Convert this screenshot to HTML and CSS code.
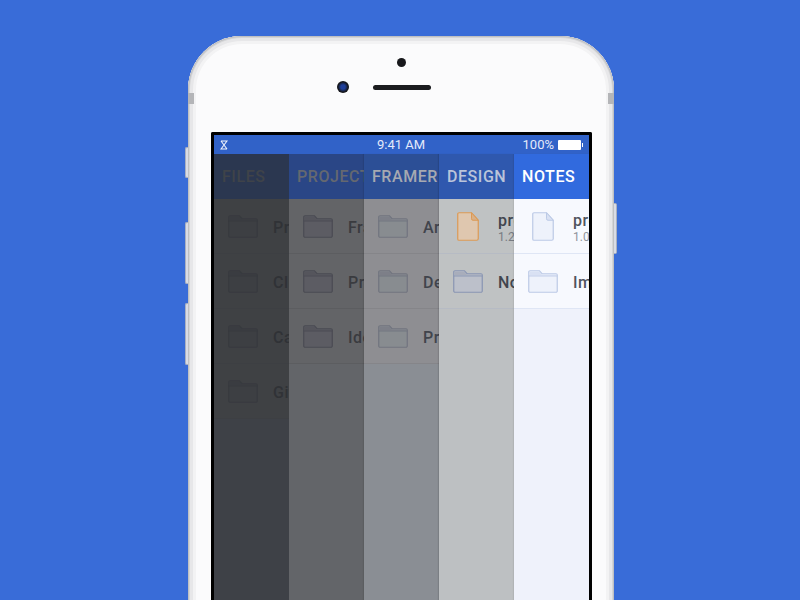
FILE: index.html
```html
<!DOCTYPE html>
<html lang="en">
<head>
<meta charset="utf-8">
<title>Files</title>
<link rel="stylesheet" href="styles.css">
</head>
<body>
<svg class="defs" width="0" height="0" aria-hidden="true">
  <symbol id="folder" viewBox="0 0 30 23">
    <path class="ic-body" d="M2 .75h9.5l2.5 3h14A1.25 1.25 0 0 1 29.25 5v16A1.25 1.25 0 0 1 28 22.25H2A1.25 1.25 0 0 1 .75 21V2A1.25 1.25 0 0 1 2 .75z"/>
    <path class="ic-tab" d="M2 1.4h9.2l2.5 3H28.6v1.2H1.4V2z"/>
    <path class="ic-line" d="M.75 6h28.5"/>
  </symbol>
  <symbol id="file" viewBox="0 0 22 29">
    <path class="ic-body" d="M2 .75h12.5l6.75 7.5V26.75A1.5 1.5 0 0 1 19.75 28.25H2A1.25 1.25 0 0 1 .75 27V2A1.25 1.25 0 0 1 2 .75z"/>
    <path class="ic-tab ic-fold" d="M14.5 .75v6a1.5 1.5 0 0 0 1.5 1.5h5.25z"/>
  </symbol>
</svg>
<main class="stage">
  <div class="phone">
    <span class="side side-mute"></span>
    <span class="side side-up"></span>
    <span class="side side-down"></span>
    <span class="side side-power"></span>
    <span class="band band-left"></span>
    <span class="band band-right"></span>
    <div class="bezel">
      <span class="sensor"></span>
      <div class="speaker-row">
        <span class="camera"></span>
        <span class="speaker"></span>
      </div>
    </div>
    <div class="screen">
      <div class="status">
        <svg class="logo" viewBox="0 0 8 10" width="8" height="10"><path d="M1 1h6L1 9h6M1 1l6 8"/></svg>
        <span class="time">9:41 AM</span>
        <div class="power">
          <span>100%</span>
          <span class="battery"></span>
        </div>
      </div>
      <div class="columns">
        <section class="col col-files">
          <h2 class="tab">FILES</h2>
          <div class="row"><svg class="icon-folder"><use href="#folder"/></svg><div class="label"><span class="name">Projects</span></div></div>
          <div class="row"><svg class="icon-folder"><use href="#folder"/></svg><div class="label"><span class="name">Clients</span></div></div>
          <div class="row"><svg class="icon-folder"><use href="#folder"/></svg><div class="label"><span class="name">Camera</span></div></div>
          <div class="row"><svg class="icon-folder"><use href="#folder"/></svg><div class="label"><span class="name">Github</span></div></div>
        </section>
        <section class="col col-projects">
          <h2 class="tab">PROJECTS</h2>
          <div class="row"><svg class="icon-folder"><use href="#folder"/></svg><div class="label"><span class="name">Framer</span></div></div>
          <div class="row"><svg class="icon-folder"><use href="#folder"/></svg><div class="label"><span class="name">Prototypes</span></div></div>
          <div class="row"><svg class="icon-folder"><use href="#folder"/></svg><div class="label"><span class="name">Ideas</span></div></div>
        </section>
        <section class="col col-framer">
          <h2 class="tab">FRAMER</h2>
          <div class="row"><svg class="icon-folder"><use href="#folder"/></svg><div class="label"><span class="name">Archive</span></div></div>
          <div class="row"><svg class="icon-folder"><use href="#folder"/></svg><div class="label"><span class="name">Design</span></div></div>
          <div class="row"><svg class="icon-folder"><use href="#folder"/></svg><div class="label"><span class="name">Projects</span></div></div>
        </section>
        <section class="col col-design">
          <h2 class="tab">DESIGN</h2>
          <div class="row"><svg class="icon-file icon-file-orange"><use href="#file"/></svg><div class="label"><span class="name">project</span><span class="meta">1.2 MB</span></div></div>
          <div class="row"><svg class="icon-folder"><use href="#folder"/></svg><div class="label"><span class="name">Notes</span></div></div>
        </section>
        <section class="col col-notes">
          <h2 class="tab">NOTES</h2>
          <div class="row"><svg class="icon-file"><use href="#file"/></svg><div class="label"><span class="name">project</span><span class="meta">1.0 MB</span></div></div>
          <div class="row"><svg class="icon-folder"><use href="#folder"/></svg><div class="label"><span class="name">Images</span></div></div>
        </section>
      </div>
    </div>
  </div>
</main>
</body>
</html>
```

FILE: styles.css
```css
* { box-sizing: border-box; }

html, body {
  margin: 0;
  height: 100%;
}

body {
  background: #396cd8;
  font-family: "Roboto", "Liberation Sans", sans-serif;
}

.defs { position: absolute; }

.stage {
  width: 800px;
  height: 600px;
  overflow: hidden;
  display: flex;
  justify-content: center;
  padding: 36px 0 0 2px;
}

.phone {
  position: relative;
  flex: none;
  width: 426px;
  height: 760px;
  padding: 0 22px 0 23px;
  border-radius: 54px;
  background: #fbfbfc;
  box-shadow:
    inset 0 0 0 1px #bfc0c3,
    inset 0 0 0 2px #d4d5d7,
    inset 0 0 0 5px #e7e7e9,
    inset 0 0 0 8px #f3f3f4;
}

.side {
  position: absolute;
  width: 3px;
  background: #d9dce5;
  border: 1px solid #aab0c0;
}

.side-mute { left: -3px; top: 111px; height: 31px; border-right: 0; border-radius: 2px 0 0 2px; }
.side-up { left: -3px; top: 186px; height: 62px; border-right: 0; border-radius: 2px 0 0 2px; }
.side-down { left: -3px; top: 267px; height: 62px; border-right: 0; border-radius: 2px 0 0 2px; }
.side-power { right: -3px; top: 167px; height: 51px; border-left: 0; border-radius: 0 2px 2px 0; }

.band {
  position: absolute;
  top: 57px;
  width: 6px;
  height: 11px;
  background: #b4b5b8;
}

.band-left { left: 0; }
.band-right { right: 0; }

.bezel {
  height: 96px;
  display: flex;
  flex-direction: column;
  align-items: center;
  padding-top: 22px;
}

.sensor {
  width: 9px;
  height: 9px;
  border-radius: 50%;
  background: #17181b;
}

.speaker-row {
  width: 100%;
  margin-top: 14px;
  display: grid;
  grid-template-columns: 1fr 58px 1fr;
  align-items: center;
}

.camera {
  justify-self: end;
  width: 12px;
  height: 12px;
  margin-right: 24px;
  border-radius: 50%;
  background: radial-gradient(circle, #1f3f9a 0, #1f3f9a 25%, #15161a 60%);
}

.speaker {
  height: 5px;
  border-radius: 3px;
  background: #1b1c1f;
}

.screen {
  width: 381px;
  height: 600px;
  border: 3px solid #000;
  border-bottom: 0;
  border-radius: 2px 2px 0 0;
  background: #eff2fb;
  overflow: hidden;
}

.status {
  height: 19px;
  padding: 0 7px 0 6px;
  display: grid;
  grid-template-columns: 1fr auto 1fr;
  align-items: center;
  background: #3162c8;
  color: #e4eafa;
  font-size: 13px;
}

.logo {
  fill: none;
  stroke: #eef2fb;
  stroke-width: 1.1;
}

.power {
  justify-self: end;
  display: flex;
  align-items: center;
  gap: 4px;
}

.battery {
  position: relative;
  width: 23px;
  height: 10px;
  margin-right: 1px;
  border-radius: 1px;
  background: #fff;
}

.battery::after {
  content: "";
  position: absolute;
  right: -2px;
  top: 3px;
  width: 1px;
  height: 4px;
  background: #fff;
}

.columns {
  display: flex;
  height: 600px;
}

.col {
  position: relative;
  flex: 0 0 75px;
  overflow: hidden;
  background: var(--bg);
  box-shadow: -1px 0 1px var(--edge);
}

.tab {
  margin: 0;
  height: 45px;
  padding-left: 8px;
  display: flex;
  align-items: center;
  white-space: nowrap;
  font-size: 16px;
  font-weight: 500;
  letter-spacing: .55px;
  background: var(--tab);
  color: var(--tab-text);
}

.row {
  height: 55px;
  display: flex;
  align-items: center;
  padding-left: 14px;
  background: var(--row);
  border-bottom: 1px solid var(--line);
  white-space: nowrap;
}

.icon-folder {
  flex: none;
  width: 30px;
  height: 23px;
  margin-right: 15px;
}

.icon-file {
  flex: none;
  width: 22px;
  height: 29px;
  margin: 0 19px 0 4px;
}

.ic-body { fill: var(--ic-fill); stroke: var(--ic-stroke); stroke-width: 1.2; }
.ic-tab { fill: var(--ic-tab); }
.ic-fold { stroke: var(--ic-stroke); stroke-width: 1; }
.ic-line { fill: none; stroke: var(--ic-stroke); stroke-width: .9; }

.label {
  display: flex;
  flex-direction: column;
  padding-top: 2px;
}

.name {
  font-size: 16px;
  font-weight: 500;
  letter-spacing: .5px;
  line-height: 19px;
  color: var(--text);
}

.meta {
  font-size: 12px;
  line-height: 14px;
  color: var(--meta);
}

.col-files {
  --bg: #3e4147;
  --tab: #2b3750;
  --tab-text: #3f4349;
  --row: #3f4144;
  --line: #3d3f43;
  --text: #303236;
  --meta: #303236;
  --edge: rgba(0, 0, 0, 0);
  --ic-fill: #3d3f43;
  --ic-tab: #3a3c41;
  --ic-stroke: #383a3f;
}

.col-projects {
  --bg: #636569;
  --tab: #2a4686;
  --tab-text: #646870;
  --row: #636467;
  --line: #5c5d60;
  --text: #3a3b3f;
  --meta: #3a3b3f;
  --edge: rgba(0, 0, 0, 0);
  --ic-fill: #5c5c63;
  --ic-tab: #55555c;
  --ic-stroke: #4a4b53;
}

.col-framer {
  --bg: #8a8e94;
  --tab: #2c4f96;
  --tab-text: #a6a9b1;
  --row: #8e8e92;
  --line: #858589;
  --text: #41444c;
  --meta: #41444c;
  --edge: rgba(0, 0, 0, .08);
  --ic-fill: #888c90;
  --ic-tab: #7d7f88;
  --ic-stroke: #71747f;
}

.col-design {
  --bg: #bdc0c2;
  --tab: #2f58ae;
  --tab-text: #bac4da;
  --row: #bfc2c3;
  --line: #b6bbc4;
  --text: #41454e;
  --meta: #777b82;
  --edge: rgba(0, 0, 0, .1);
  --ic-fill: #bcc0ca;
  --ic-tab: #a8adbb;
  --ic-stroke: #8995b2;
}

.icon-file-orange {
  --ic-fill: #dfc7af;
  --ic-tab: #d9b087;
  --ic-stroke: #dc9a55;
}

.col-notes {
  --bg: #eff2fb;
  --tab: #316ade;
  --tab-text: #fff;
  --row: #f7f9fe;
  --line: #dfe6f5;
  --text: #50545e;
  --meta: #8f939c;
  --edge: rgba(0, 0, 0, .06);
  --ic-fill: #eef2fb;
  --ic-tab: #d9e1f3;
  --ic-stroke: #bccae6;
}
```
